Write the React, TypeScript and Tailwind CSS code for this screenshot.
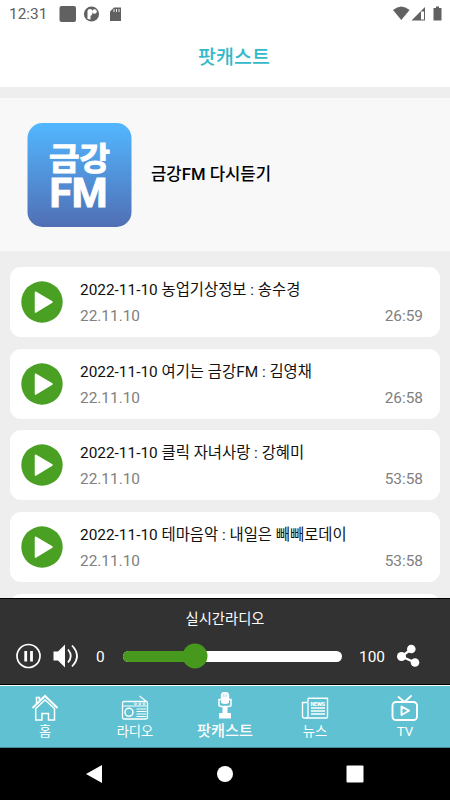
import React, { useState } from "react";

interface Episode {
  id: number;
  title: string;
  date: string;
  duration: string;
}

const episodes: Episode[] = [
  { id: 1, title: "2022-11-10 농업기상정보 : 송수경", date: "22.11.10", duration: "26:59" },
  { id: 2, title: "2022-11-10 여기는 금강FM : 김영채", date: "22.11.10", duration: "26:58" },
  { id: 3, title: "2022-11-10 클릭 자녀사랑 : 강혜미", date: "22.11.10", duration: "53:58" },
  { id: 4, title: "2022-11-10 테마음악 : 내일은 빼빼로데이", date: "22.11.10", duration: "53:58" },
];

const StatusBar = () => (
  <div className="flex h-[27px] shrink-0 items-center justify-between bg-white pr-2 pl-[9px] text-[#5f5f5f]">
    <div className="flex items-center">
      <span className="w-[50px] text-[15.4px] leading-[26px]">12:31</span>
      <svg width="64" height="18" viewBox="0 0 64 18" fill="#616161">
        <rect x="0.5" y="1" width="16.5" height="16" rx="2" />
        <circle cx="32.5" cy="9" r="7.6" />
        <path d="M28.500 14V6.500q0-2.500 2.500-2.500t2.500 2.500v1.500q0 2-2 3v3.500z" fill="#fff" />
        <circle cx="35.500" cy="6.500" r="2.300" fill="#fff" />
        <path d="M55 2.500h7V16H51V6.500z" />
        <path d="M55 4v3M57.500 4v3M60 4v3" stroke="#fff" strokeWidth="0.900" />
      </svg>
    </div>
    <svg width="49" height="16" viewBox="0 0 49 16" fill="#616161">
      <path d="M0 4Q8.3-3 16.6 4L8.3 14z" />
      <path d="M18.5 14.5L32 1v13.500z" />
      <path d="M28 5.500h3v8h-3z" fill="#fff" />
      <path d="M40.500 2h2.500V0.500h3V2h2.500v12.500h-8z" />
    </svg>
  </div>
);

const Logo = () => (
  <svg width="106" height="106" viewBox="0 0 106 106">
    <defs>
      <linearGradient id="logo" x1="0" y1="0" x2="0" y2="1">
        <stop offset="0" stopColor="#52b7ff" />
        <stop offset="1" stopColor="#506fb5" />
      </linearGradient>
    </defs>
    <rect x="1.5" y="1" width="104" height="104" rx="15" fill="url(#logo)" />
    <g fill="#fff" stroke="#fff" strokeWidth="1" fontWeight="700">
      <text x="23" y="47.800" fontSize="31.500" textLength="61" lengthAdjust="spacingAndGlyphs">금강</text>
      <text x="23.500" y="84.500" fontSize="41.500" textLength="58" lengthAdjust="spacingAndGlyphs">FM</text>
    </g>
  </svg>
);

const EpisodeCard = ({ episode }: { episode: Episode }) => (
  <li className="flex h-[70px] shrink-0 items-center rounded-[11px] bg-white pr-[17px] pl-[11px]">
    <button aria-label="play" className="mr-[17px] shrink-0">
      <svg width="42" height="42" viewBox="0 0 42 42">
        <circle cx="21" cy="21" r="20.700" fill="#49a023" />
        <path d="M14.500 11.200L31 21L14.500 31z" fill="#fff" stroke="#fff" strokeWidth="1.500" strokeLinejoin="round" />
      </svg>
    </button>
    <div className="flex-1 pt-[2px] text-[15.4px]">
      <p className="h-[26px] leading-[26px] text-[#111]">{episode.title}</p>
      <div className="flex h-[26px] justify-between leading-[26px] text-[#808080]">
        <span>{episode.date}</span>
        <span>{episode.duration}</span>
      </div>
    </div>
  </li>
);

const Player = () => {
  const [volume] = useState(33);

  return (
    <div className="h-[87px] shrink-0 border-t border-b border-black bg-[#323232] text-white">
      <p className="mt-[7px] h-[26px] text-center text-[14.3px] leading-[26px]">실시간라디오</p>
      <div className="mt-[11px] flex h-[26px] items-center pl-4">
        <svg width="62" height="26" viewBox="0 0 62 26" fill="none" stroke="#fff">
          <circle cx="12.500" cy="13" r="11.500" strokeWidth="1.700" />
          <path d="M9.700 8v10.500M15.500 8v10.500" strokeWidth="2.800" />
          <path d="M37.500 8.500h4.500L49 1.500v23L42 17.500h-4.500z" fill="#fff" stroke="none" />
          <path d="M52 6.500Q57.500 13 52 19.500" strokeWidth="1.800" />
          <path d="M56 2.500Q66 13 56 23.500" strokeWidth="1.800" />
        </svg>
        <span className="ml-[18px] w-[27px] pt-[3px] text-[15.4px]">0</span>
        <div className="relative h-[11px] w-[219px] rounded-full bg-white">
          <div className="h-full rounded-full bg-[#47991e]" style={{ width: `${volume}%` }} />
          <div
            className="absolute top-1/2 size-[25px] -translate-x-1/2 -translate-y-1/2 rounded-full bg-[#47991e]"
            style={{ left: `${volume}%` }}
          />
        </div>
        <span className="ml-[17px] w-[38px] pt-[3px] text-[15.4px]">100</span>
        <svg width="23" height="24" viewBox="0 0 23 24" fill="#fff" stroke="#fff">
          <path d="M14.500 5L4.500 12.500L18 18.500" fill="none" strokeWidth="2.300" />
          <circle cx="14.300" cy="5" r="4.300" stroke="none" />
          <circle cx="4.500" cy="12.500" r="4.500" stroke="none" />
          <circle cx="18" cy="18.500" r="4.300" stroke="none" />
        </svg>
      </div>
    </div>
  );
};

const HomeIcon = () => (
  <svg width="28" height="28" viewBox="0 0 28 28" fill="none" stroke="#fff" strokeWidth="1.500">
    <path d="M1.500 15L14 3L26.500 15" strokeWidth="2" />
    <path d="M4.700 15.500V27H11V20.500h6.500V27h6V15.500L14 7z" />
    <path d="M5.500 10.500V4.500h3v3" />
  </svg>
);

const RadioIcon = () => (
  <svg width="28" height="28" viewBox="0 0 28 28" fill="none" stroke="#fff">
    <rect x="1.500" y="8.500" width="25" height="17.500" rx="1.500" strokeWidth="1.300" />
    <path d="M2 13h24M18.500 3l7 5.500" strokeWidth="1.200" />
    <circle cx="8" cy="19.300" r="4" strokeWidth="1.500" />
    <path d="M15.500 16h10M15.500 18.500h10M15.500 21h10M15.500 23.500h10" strokeWidth="1.200" />
    <circle cx="14.500" cy="10.800" r="1" strokeWidth="0.900" />
    <circle cx="18.800" cy="10.800" r="1" strokeWidth="0.900" />
    <circle cx="23" cy="10.800" r="1" strokeWidth="0.900" />
  </svg>
);

const PodcastIcon = () => (
  <svg width="28" height="28" viewBox="0 -1 28 28" className="-mt-[2px] mb-[2px]" fill="none" stroke="#fff">
    <path d="M9.800 7.500V4q0-4 3.200-4h2q3.200 0 3.200 4v3.500z" fill="#fff" stroke="none" />
    <path d="M12.800 2v3M15.200 2v3" stroke="#5fc1d2" strokeWidth="0.500" />
    <path d="M10 7.500H8V13q0 1.500 2.500 1.500h7q2.500 0 2.500-1.500V7.500h-2" strokeWidth="1.500" />
    <path d="M10 6.500h8v4.500q-4 2-8 0z" fill="#fff" stroke="none" />
    <path d="M11.500 14.500h5V21H19.500q.500 0 .500.500v5H8v-5q0-.500.500-.500h3z" fill="#fff" stroke="none" />
  </svg>
);

const NewsIcon = () => (
  <svg width="28" height="28" viewBox="0 -0.500 28 28" fill="none" stroke="#fff">
    <path d="M7 4.700h19.500v18.500q0 1.300-1.300 1.300H3.500q-2 0-2-2V9H6" strokeWidth="1.400" />
    <path d="M7 4.700v17.500q0 2.300-2 2.300" strokeWidth="1.300" />
    <text x="9.500" y="12.200" fontSize="5.600" fontWeight="900" fill="#fff" stroke="none" textLength="14.500">NEWS</text>
    <path d="M10 14.500h14M10 17.500h14M10 20.500h14" strokeWidth="1.300" />
  </svg>
);

const TvIcon = () => (
  <svg width="28" height="28" viewBox="0.500 -1 28 28" fill="none" stroke="#fff" strokeWidth="1.900" strokeLinecap="round" strokeLinejoin="round">
    <rect x="2" y="8" width="24.500" height="18" rx="3.500" />
    <path d="M14 8L8 3M14 8l6.500-6M11 12.500v8.500l7.500-4.300z" />
  </svg>
);

const tabs = [
  { label: "홈", icon: <HomeIcon /> },
  { label: "라디오", icon: <RadioIcon /> },
  { label: "팟캐스트", icon: <PodcastIcon />, active: true },
  { label: "뉴스", icon: <NewsIcon /> },
  { label: "TV", icon: <TvIcon /> },
];

const TabBar = () => (
  <nav className="grid h-[63px] shrink-0 grid-cols-5 border-t border-b border-t-white border-b-[#408995] bg-[#5fc1d2] text-white">
    {tabs.map((tab) => (
      <div key={tab.label} className="flex flex-col items-center pt-[7px]">
        {tab.icon}
        <span
          className={
            tab.active
              ? "-mt-[3px] text-[15.2px] leading-[26px] font-medium"
              : "-mt-[2px] text-[13.3px] leading-[26px]"
          }
        >
          {tab.label}
        </span>
      </div>
    ))}
  </nav>
);

const SystemNav = () => (
  <div className="flex h-[52px] shrink-0 items-center justify-center bg-black">
    <svg width="280" height="18" viewBox="0 0 280 18" fill="#fff">
      <path d="M1 9L17 0v18z" />
      <circle cx="140" cy="9" r="8" />
      <rect x="261.500" y="0.500" width="17" height="17" rx="1" />
    </svg>
  </div>
);

const App = () => {
  return (
    <div className="flex h-[800px] w-[450px] flex-col overflow-hidden bg-[#eee] font-['Roboto','Noto_Sans_CJK_KR',sans-serif]">
      <StatusBar />
      <header className="flex h-[60px] shrink-0 items-center justify-center bg-white pt-[2px] pl-[18px]">
        <h1 className="text-[19.500px] leading-[28px] font-medium text-[#32bacb]">팟캐스트</h1>
      </header>

      <section className="mt-[11px] flex h-[153px] shrink-0 items-center bg-[#f8f8f8] pl-[26px]">
        <Logo />
        <h2 className="ml-[19px] pt-[1px] text-[16.700px] leading-[26px] font-medium text-black">금강FM 다시듣기</h2>
      </section>

      <ul className="flex min-h-0 flex-1 flex-col gap-[11.700px] overflow-hidden px-[10px] pt-4">
        {episodes.map((episode) => (
          <EpisodeCard key={episode.id} episode={episode} />
        ))}
        {/* next row peeks out under the player */}
        <li className="h-[70px] shrink-0 rounded-[11px] bg-white" />
      </ul>

      <Player />
      <TabBar />
      <SystemNav />
    </div>
  );
};

export default App;
